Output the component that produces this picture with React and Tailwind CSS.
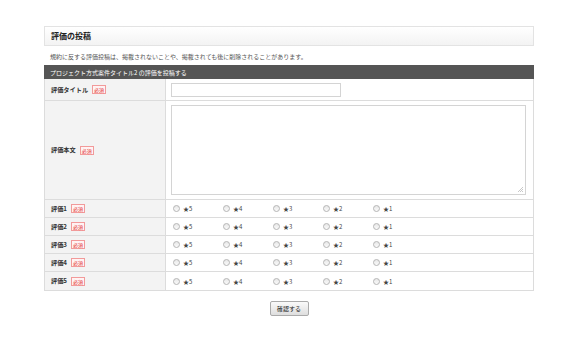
import React from "react";

const ratings = ["評価1", "評価2", "評価3", "評価4", "評価5"];
const stars = ["★5", "★4", "★3", "★2", "★1"];

const Required = () => (
  <span className="ml-[4px] inline-flex h-[9px] w-[14px] items-center justify-center border border-[#f29a9a] bg-[#fff3f3] text-[5px] font-normal leading-none text-[#e03030]">
    必須
  </span>
);

const Radio = () => (
  <span className="inline-block h-[7px] w-[7px] rounded-full border border-[#b5b5b5] bg-gradient-to-b from-[#e8e8e8] to-[#fafafa]" />
);

export default function App() {
  return (
    <div
      className="min-h-[340px] w-[580px] bg-white pt-[26px] text-[#333]"
      style={{ fontFamily: '"Noto Sans CJK JP", "Noto Sans", sans-serif' }}
    >
      <div className="ml-[44px] w-[490px]">
        <div className="flex h-[20px] items-center border border-[#e3e3e3] bg-gradient-to-b from-white to-[#f3f3f3] pl-[6px] text-[8px] font-bold text-[#222]">
          評価の投稿
        </div>
        <div className="flex h-[19px] items-center pl-[6px] pt-[1px] text-[6px] text-[#555]">
          規約に反する評価投稿は、掲載されないことや、掲載されても後に削除されることがあります。
        </div>
        <div className="flex h-[14px] items-center bg-[#555] pl-[6px] text-[6px] text-white">
          プロジェクト方式案件タイトル2 の評価を投稿する
        </div>
        <div className="border-x border-b border-[#dcdcdc] text-[6.2px]">
          <div className="flex h-[22px] border-b border-[#dcdcdc]">
            <div className="flex w-[121px] items-center border-r border-[#dcdcdc] bg-[#f3f3f3] pl-[6px] font-bold">
              評価タイトル
              <Required />
            </div>
            <div className="flex flex-1 items-center pl-[5px]">
              <div className="h-[14px] w-[170px] border border-[#d4d4d4] bg-white" />
            </div>
          </div>
          <div className="flex h-[99px] border-b border-[#dcdcdc]">
            <div className="flex w-[121px] items-center border-r border-[#dcdcdc] bg-[#f3f3f3] pl-[6px] font-bold">
              評価本文
              <Required />
            </div>
            <div className="flex flex-1 items-center pl-[5px] pr-[7px]">
              <div className="relative h-[90px] w-full border border-[#d4d4d4] bg-white">
                <svg className="absolute bottom-[2px] right-[2px]" width="5" height="5" viewBox="0 0 5 5">
                  <path d="M5 0L0 5M5 2L2 5M5 4L4 5" stroke="#bbb" strokeWidth="0.8" />
                </svg>
              </div>
            </div>
          </div>
          {ratings.map((r, i) => (
            <div
              key={r}
              className={`flex h-[18px] ${i < ratings.length - 1 ? "border-b border-[#dcdcdc]" : ""}`}
            >
              <div className="flex w-[121px] items-center border-r border-[#dcdcdc] bg-[#f3f3f3] pl-[6px] font-bold">
                {r}
                <Required />
              </div>
              <div className="flex flex-1 items-center pl-[7px]">
                {stars.map((s) => (
                  <div key={s} className="flex w-[50px] items-center gap-[3px]">
                    <Radio />
                    <span className="text-[6px] text-[#444]">{s}</span>
                  </div>
                ))}
              </div>
            </div>
          ))}
        </div>
        <div className="mt-[10px] flex justify-center">
          <button
            type="button"
            className="flex h-[15px] w-[39px] items-center justify-center rounded-[2px] border border-[#aaa] bg-gradient-to-b from-[#fafafa] to-[#dedede] text-[6px] text-[#222]"
          >
            確認する
          </button>
        </div>
      </div>
    </div>
  );
}
